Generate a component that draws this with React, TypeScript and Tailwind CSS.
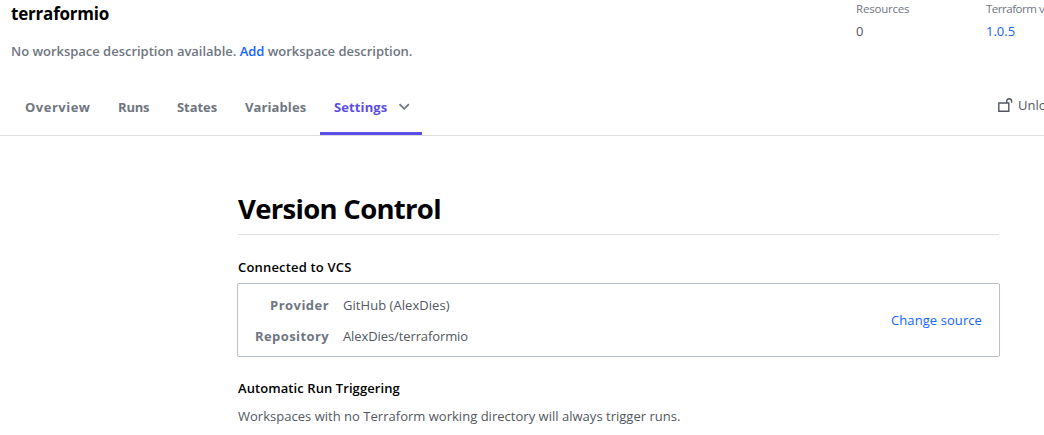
const tabs = [
  { label: 'Overview', style: 'w-[65px] mr-7 tracking-[0.5px]' },
  { label: 'Runs', style: 'w-[31px] mr-7 tracking-[-0.2px]' },
  { label: 'States', style: 'w-[40px] mr-7 tracking-[-0.05px]' },
  { label: 'Variables', style: 'w-[61px] mr-[14px] tracking-[0.1px]' },
];

function Chevron() {
  return (
    <svg className="ml-[10px] mt-[5px] h-[10px] w-3" viewBox="0 0 12 10" fill="none" stroke="#6f7682" strokeWidth="1.8">
      <path d="M1.5 2.2 L6.2 6.8 L10.9 2.2" />
    </svg>
  );
}

function Unlocked() {
  return (
    <svg className="mt-[3px] h-[15px] w-[15px] shrink-0" viewBox="0 0 15 15" fill="none" stroke="#525761" strokeWidth="1.4">
      <path d="M0.8 6 H10.8 V14.2 H0.8 Z" />
      <path d="M8.7 6 V4 C8.7 0.9 13.6 0.9 13.6 4 V5.8" />
    </svg>
  );
}

export default function App() {
  return (
    <div className="flex h-[435px] w-[1044px] flex-col overflow-hidden whitespace-nowrap bg-white font-['Open_Sans','Noto_Sans',sans-serif] text-[13px] leading-5 text-[#525761]">
      <header className="flex h-[135.5px] shrink-0 flex-col border-b border-[#dcdde1]">
        <div className="flex h-[84px] shrink-0 pl-[11px]">
          <div className="w-[845px] shrink-0">
            <h1 className="pt-[2px] text-[17px] font-bold leading-6 tracking-[-0.2px] text-black">terraformio</h1>
            <p className="mt-[15px] font-semibold tracking-[-0.02px] text-[#6f7682]">
              No workspace description available. <a className="text-[#1563ff]">Add</a> workspace description.
            </p>
          </div>
          <div className="w-[130px] shrink-0">
            <div className="text-[11.5px] leading-[18px] tracking-[-0.2px] text-[#6f7682]">Resources</div>
            <div className="mt-[3px]">0</div>
          </div>
          <div>
            <div className="text-[11.5px] leading-[18px] tracking-[-0.48px] text-[#6f7682]">Terraform version</div>
            <a className="mt-[3px] block text-[#1563ff]">1.0.5</a>
          </div>
        </div>
        <div className="flex h-[51px] shrink-0 justify-between">
          <nav className="flex pl-[25px] font-bold text-[#6f7682]">
            {tabs.map((tab) => (
              <a key={tab.label} className={`${tab.style} pt-[13px]`}>{tab.label}</a>
            ))}
            <a className="flex w-[102px] border-b-[3px] border-[#5c4ee5] pl-[14px] pt-[13px] text-[#5c4ee5]">
              <span className="w-[54px] tracking-[0.12px]">Settings</span>
              <Chevron />
            </a>
          </nav>
          <button className="flex w-[46px] gap-[5px] overflow-hidden pt-[10px]">
            <Unlocked />
            <span className="pt-[1px]">Unlock</span>
          </button>
        </div>
      </header>
      <main className="ml-[238px] w-[761px] pt-[52px]">
        <h2 className="h-[47px] border-b border-[#dcdfe6] text-[27.5px] font-bold leading-[42px] tracking-[-0.7px] text-black">Version Control</h2>
        <h3 className="mt-[22px] font-semibold tracking-[0.18px] text-black">Connected to VCS</h3>
        <section className="-ml-px mt-[6px] flex h-[74px] w-[763px] items-center justify-between rounded-[2px] border border-[#bac1cc] pr-[17px]">
          <dl className="grid grid-cols-[91px_auto] gap-x-[14px] gap-y-[11px] pt-[2px]">
            <dt className="text-right font-bold tracking-[0.45px] text-[#6f7682]">Provider</dt>
            <dd className="tracking-[0.05px]">GitHub (AlexDies)</dd>
            <dt className="text-right font-bold tracking-[0.4px] text-[#6f7682]">Repository</dt>
            <dd className="tracking-[-0.1px]">AlexDies/terraformio</dd>
          </dl>
          <a className="tracking-[0.08px] text-[#1563ff]">Change source</a>
        </section>
        <h3 className="mt-[21px] font-semibold tracking-[0.08px] text-black">Automatic Run Triggering</h3>
        <p className="mt-2 tracking-[0.02px]">Workspaces with no Terraform working directory will always trigger runs.</p>
      </main>
    </div>
  );
}
